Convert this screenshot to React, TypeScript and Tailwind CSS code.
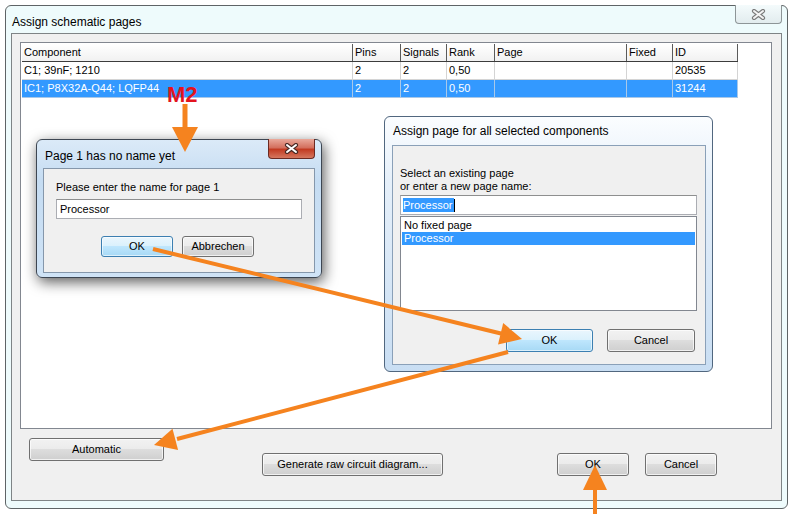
import clsx from 'clsx';
import type { ReactNode } from 'react';

const columns = [
  { name: 'Component', w: 'w-[331px]' },
  { name: 'Pins', w: 'w-[48px]' },
  { name: 'Signals', w: 'w-[46px]' },
  { name: 'Rank', w: 'w-[48px]' },
  { name: 'Page', w: 'w-[132px]' },
  { name: 'Fixed', w: 'w-[46px]' },
  { name: 'ID', w: 'w-[65px]' },
];

const rows = [
  { cells: ['C1; 39nF; 1210', '2', '2', '0,50', '', '', '20535'], selected: false },
  { cells: ['IC1; P8X32A-Q44; LQFP44', '2', '2', '0,50', '', '', '31244'], selected: true },
];

function Button({ children, focus, className }: { children: ReactNode; focus?: boolean; className?: string }) {
  return (
    <div
      className={clsx(
        'flex shrink-0 items-center justify-center rounded-[3px] border text-[11px] text-black',
        focus
          ? 'border-[#3c7fb1] bg-[linear-gradient(#eaf6fd,#d9f0fc_50%,#bee6fd_50%,#a7d9f5)] shadow-[inset_0_0_0_1px_rgba(255,255,255,0.6)]'
          : 'border-[#707070] bg-[linear-gradient(#f2f2f2,#ebebeb_50%,#dddddd_50%,#cfcfcf)] shadow-[inset_0_0_0_1px_rgba(255,255,255,0.7)]',
        className
      )}
    >
      {children}
    </div>
  );
}

function CloseX({ light }: { light?: boolean }) {
  return (
    <svg width="15" height="11" viewBox="0 0 15 11">
      <path d="M3 2 L12 9 M12 2 L3 9" stroke={light ? '#4a2a25' : '#7b7b7b'} strokeWidth="4.2" strokeLinecap="round" />
      <path d="M3 2 L12 9 M12 2 L3 9" stroke={light ? '#ffffff' : '#f4f4f4'} strokeWidth="2" strokeLinecap="round" />
    </svg>
  );
}

function Arrows() {
  const c = '#f5831f';
  return (
    <svg className="pointer-events-none absolute left-0 top-0" width="793" height="514" viewBox="0 0 793 514">
      <line x1="185" y1="104" x2="185" y2="130" stroke={c} strokeWidth="5" />
      <polygon points="172,127 198,127 185,152" fill={c} />
      <line x1="153" y1="249" x2="503" y2="334" stroke={c} strokeWidth="4" />
      <polygon points="498,344.5 503.2,323.1 522,339" fill={c} />
      <line x1="508" y1="352" x2="177" y2="439" stroke={c} strokeWidth="4" />
      <polygon points="172.5,428.8 178.1,450 154,445" fill={c} />
      <line x1="595" y1="514" x2="595" y2="486" stroke={c} strokeWidth="4" />
      <polygon points="583,490 607,490 595,465" fill={c} />
    </svg>
  );
}

function NameDialog() {
  return (
    <div className="absolute left-[36px] top-[139px] flex h-[139px] w-[286px] flex-col rounded-[6px] border border-[#3d4652] bg-[linear-gradient(#dbeaf8,#c5dcf2_30%,#cfe3f6)] px-[6px] pb-[4px] shadow-[2px_4px_14px_rgba(0,0,0,0.65)]">
      <div className="flex h-[28px] shrink-0 justify-between">
        <span className="pl-[2px] pt-[7px] text-[12px] text-black">Page 1 has no name yet</span>
        <div className="-mt-px flex h-[20px] w-[47px] items-center justify-center rounded-b-[4px] border border-t-0 border-[#6b2a22] bg-[linear-gradient(#e9a99b,#d4705e_45%,#c23b22_55%,#d5775f)]">
          <CloseX light />
        </div>
      </div>
      <div className="flex flex-1 flex-col border border-[#8597ab] bg-[#f0f0f0] pl-[12px] pt-[12px]">
        <span className="h-[13px] text-[11px] leading-[13px] text-black">Please enter the name for page 1</span>
        <div className="mt-[5px] flex h-[20px] w-[246px] items-center border border-[#abadb3] border-t-[#8e8f8f] bg-white pl-[3px] text-[11px] text-black">
          Processor
        </div>
        <div className="ml-[45px] mt-[17px] flex gap-[9px]">
          <Button focus className="h-[21px] w-[72px]">OK</Button>
          <Button className="h-[21px] w-[72px]">Abbrechen</Button>
        </div>
      </div>
    </div>
  );
}

function AssignDialog() {
  return (
    <div className="absolute left-[384px] top-[116px] flex h-[256px] w-[329px] flex-col rounded-[6px] border border-[#51677f] bg-[linear-gradient(#fbfdff,#e6f0fa_25%,#c9def3)] pb-[6px] pl-[7px] pr-[6px]">
      <div className="flex h-[28px] shrink-0 items-center">
        <span className="pl-[1px] text-[12px] text-black">Assign page for all selected components</span>
      </div>
      <div className="flex flex-1 flex-col border border-[#8aa0b8] bg-[#f0f0f0] pl-[7px] pt-[21px]">
        <span className="text-[11px] leading-[13px] text-black">Select an existing page</span>
        <span className="text-[11px] leading-[13px] text-black">or enter a new page name:</span>
        <div className="mt-[2px] flex h-[20px] w-[297px] items-center border border-[#abadb3] border-t-[#8e8f8f] bg-white pl-[2px] text-[11px]">
          <span className="bg-[#3399ff] pr-px leading-[14px] text-white">Processor</span>
          <span className="h-[13px] w-px bg-black" />
        </div>
        <div className="mt-px flex h-[95px] w-[297px] flex-col border border-[#828790] bg-white p-px pt-[2px] text-[11px] leading-[13px]">
          <span className="pl-[2px] text-black">No fixed page</span>
          <span className="bg-[#3399ff] pl-[2px] text-white">Processor</span>
        </div>
        <div className="mt-[18px] flex w-[297px] justify-end gap-[14px] pr-[2px]">
          <Button focus className="h-[23px] w-[87px]">OK</Button>
          <Button className="h-[23px] w-[88px]">Cancel</Button>
        </div>
      </div>
    </div>
  );
}

export default function App() {
  return (
    <div className="relative h-[514px] w-[793px] overflow-hidden bg-white font-['Liberation_Sans',Arial,sans-serif]">
      <div className="ml-[5px] mt-[5px] flex h-[504px] w-[783px] flex-col rounded-[6px] border border-[#5e6466] bg-[#eefbfc] px-[5px] pb-[7px]">
        <div className="flex h-[27px] shrink-0 justify-between">
          <span className="pl-px pt-[7px] text-[12px] text-black">Assign schematic pages</span>
          <div className="-mt-px flex h-[19px] w-[47px] items-center justify-center rounded-b-[4px] border border-t-0 border-[#8d9597] bg-[linear-gradient(#f4fbfc,#e2ecee)]">
            <CloseX />
          </div>
        </div>

        <div className="flex flex-1 flex-col border border-[#7e8486] bg-[#f0f0f0] pl-[8px] pr-[9px] pt-[8px]">
          <div className="h-[387px] border border-[#828790] bg-white p-px">
            <div className="flex h-[18px] w-[716px] border-b border-[#3c3c3c] bg-[linear-gradient(#ffffff,#f1f1f1)] text-[11px] text-black">
              {columns.map((col) => (
                <div key={col.name} className={clsx('flex items-center border-r border-[#5a5a5a] pl-[2px]', col.w)}>
                  {col.name}
                </div>
              ))}
            </div>
            {rows.map((row, ri) => (
              <div
                key={ri}
                className={clsx(
                  'flex h-[18px] w-[716px] text-[11px]',
                  row.selected ? 'bg-[#3399ff] text-white' : 'bg-white text-black'
                )}
              >
                {row.cells.map((cell, ci) => (
                  <div
                    key={ci}
                    className={clsx(
                      'flex items-center border-b border-r pl-[2px]',
                      row.selected ? 'border-[#a9c8e8]' : 'border-[#d4d4d4]',
                      columns[ci].w
                    )}
                  >
                    {cell}
                  </div>
                ))}
              </div>
            ))}
          </div>

          <div className="flex items-start">
            <Button className="ml-[9px] mt-[9px] h-[23px] w-[135px]">Automatic</Button>
            <Button className="ml-[98px] mt-[24px] h-[23px] w-[181px]">Generate raw circuit diagram...</Button>
            <Button className="ml-[114px] mt-[24px] h-[23px] w-[72px]">OK</Button>
            <Button className="ml-[16px] mt-[24px] h-[23px] w-[72px]">Cancel</Button>
          </div>
        </div>
      </div>

      <NameDialog />
      <AssignDialog />

      <svg className="pointer-events-none absolute left-[166px] top-[82px]" width="40" height="24" viewBox="0 0 40 24">
        <text x="1" y="20" fill="#e3141e" fontFamily="Liberation Sans, Arial, sans-serif" fontWeight="bold" fontSize="22">M2</text>
      </svg>
      <Arrows />
    </div>
  );
}
